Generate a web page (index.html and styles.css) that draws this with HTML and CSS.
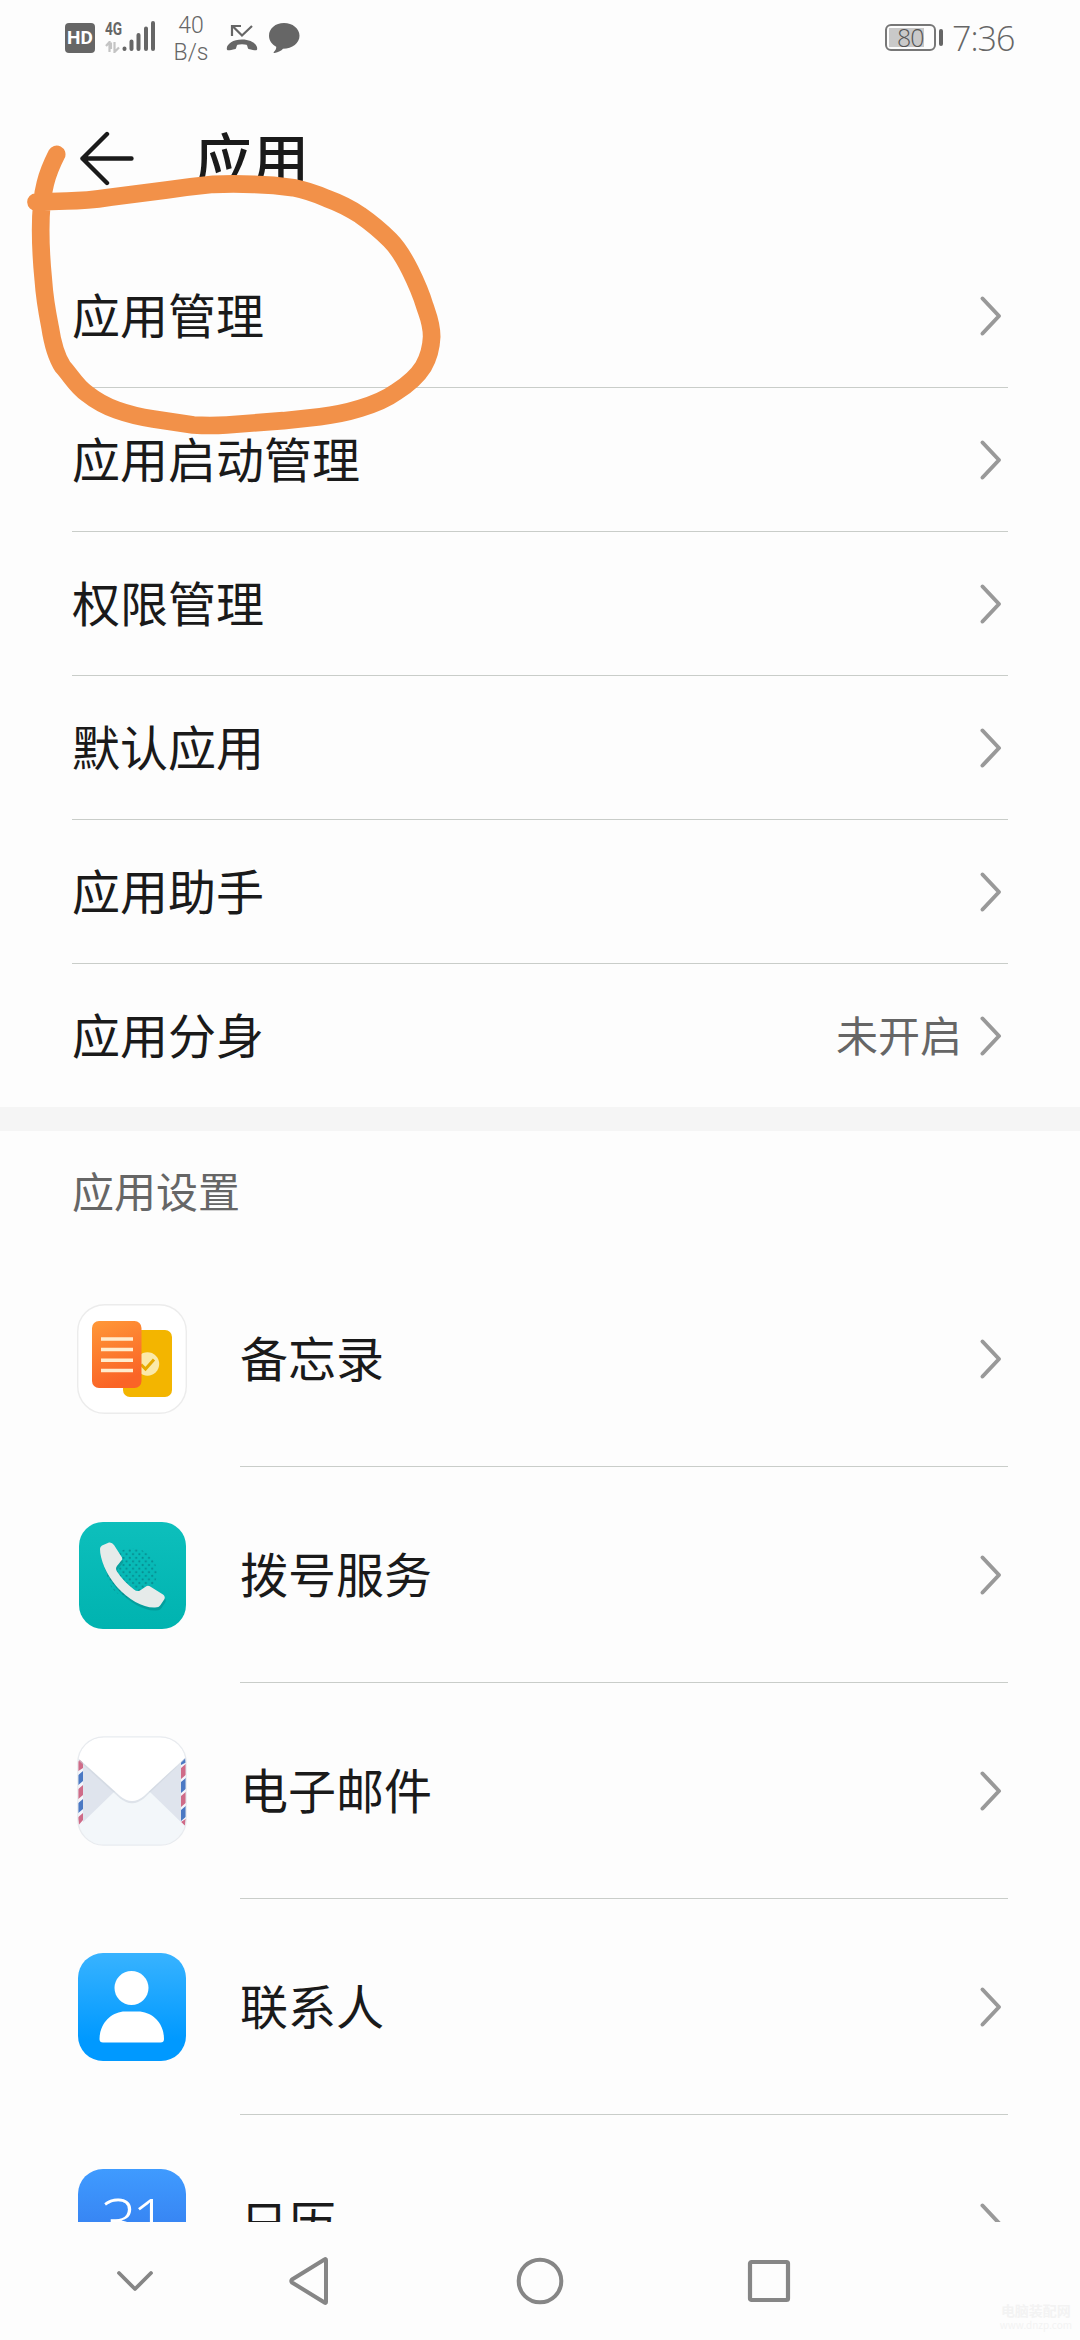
FILE: index.html
```html
<!DOCTYPE html>
<html lang="zh-CN">
<head>
<meta charset="utf-8">
<title>应用</title>
<link rel="stylesheet" href="styles.css">
</head>
<body>
<svg class="defs" width="0" height="0">
  <symbol id="chevron" viewBox="0 0 24 42"><path d="M3.5 3.5 20 21 3.5 38.5" fill="none" stroke="#999" stroke-width="4" stroke-linecap="round" stroke-linejoin="round"/></symbol>
</svg>
<div class="screen">
  <header class="status">
    <div class="hd">HD</div>
    <div class="signal">
      <div class="net"><span class="gen">4G</span>
        <svg width="15" height="12" viewBox="0 0 15 12"><path d="M1 5 4.5 1V11M6 1.5V8M9.500 1V11L14 6.500" fill="none" stroke="#c4c4c4" stroke-width="2.200"/></svg>
      </div>
      <svg class="bars" width="34" height="32" viewBox="0 0 34 32"><g stroke="#666" stroke-width="4" stroke-linecap="round"><path d="M2.500 28.500V29M9.500 21.500V29M16.500 15V29M24 8.500V29M31 3V29"/></g></svg>
    </div>
    <div class="speed"><span>40</span><span>B/s</span></div>
    <svg class="missed" width="32" height="28" viewBox="0 0 32 28"><path d="M6 12V2H15M6.500 2 16 11.500 26 2" fill="none" stroke="#666" stroke-width="2.200"/><path d="M.8 25C.5 20 7 15.500 16 15.500S31.500 20 31.200 25C31 27 29 26.500 22.500 25 21.500 24.700 21.800 22 20.500 20.800 18 20 14 20 11.500 20.800 10.200 22 10.500 24.700 9.500 25 3 26.500 1 27 .8 25Z" fill="#666"/></svg>
    <svg class="bubble" width="32" height="32" viewBox="0 0 32 32"><path d="M16 1C7.500 1 1 6.500 1 13.700c0 4.800 3 8.800 7.200 11 .3 1.800-.7 3.500-2.400 5.300-.5.700 0 1.200.8 1 4-.9 6.700-2.200 8.400-4.300C24.500 26.700 31.500 21 31.500 13.700 31.500 6.500 24.500 1 16 1Z" fill="#666"/></svg>
    <div class="battery"><div class="shell"><span class="level">80</span></div><i class="tip"></i></div>
    <time class="clock">7:36</time>
  </header>

  <div class="titlebar">
    <svg width="56" height="56" viewBox="0 0 56 56"><path d="M29 3 4.500 27.500 29 52M4.500 27.500H53.500" fill="none" stroke="#1a1a1a" stroke-width="4.400" stroke-linecap="round" stroke-linejoin="round"/></svg>
    <h1>应用</h1>
  </div>

  <main>
    <ul class="menu">
      <li><span>应用管理</span><svg class="chev"><use href="#chevron"/></svg></li>
      <li><span>应用启动管理</span><svg class="chev"><use href="#chevron"/></svg></li>
      <li><span>权限管理</span><svg class="chev"><use href="#chevron"/></svg></li>
      <li><span>默认应用</span><svg class="chev"><use href="#chevron"/></svg></li>
      <li><span>应用助手</span><svg class="chev"><use href="#chevron"/></svg></li>
      <li><span>应用分身</span><em>未开启</em><svg class="chev"><use href="#chevron"/></svg></li>
    </ul>
    <div class="band"></div>
    <h2>应用设置</h2>
    <ul class="apps">
      <li>
        <svg class="icon" viewBox="0 0 110 110">
          <defs><linearGradient id="memo" x2="0.300" y2="1"><stop stop-color="#ff9838"/><stop offset="1" stop-color="#fa6426"/></linearGradient></defs>
          <rect x=".7" y=".7" width="108.600" height="108.600" rx="27" fill="#fff" stroke="#ececec" stroke-width="1.400"/>
          <rect x="46" y="26" width="49" height="67" rx="7" fill="#f3b500"/>
          <circle cx="70.500" cy="60" r="11.700" fill="#fbe9a9"/>
          <path d="M64 60.500 68.500 65 77 55.500" fill="none" stroke="#e6a900" stroke-width="3"/>
          <rect x="15" y="17" width="49.500" height="67" rx="7" fill="url(#memo)"/>
          <path d="M24 35H56M24 45.500H56M24 56.200H56M24 66.500H56" stroke="#ffeccd" stroke-width="3.400"/>
        </svg>
        <div class="line"><span>备忘录</span><svg class="chev"><use href="#chevron"/></svg></div>
      </li>
      <li>
        <svg class="icon" viewBox="0 0 110 110">
          <defs>
            <linearGradient id="dial" x2="0" y2="1"><stop stop-color="#0dbfbc"/><stop offset="1" stop-color="#00b3b0"/></linearGradient>
            <pattern id="dots" width="6.400" height="7.200" patternUnits="userSpaceOnUse"><circle cx="1.600" cy="1.800" r="1.100" fill="#078f92"/><circle cx="4.800" cy="5.400" r="1.100" fill="#078f92"/></pattern>
          </defs>
          <rect x="2" y="2" width="107" height="107" rx="24" fill="url(#dial)"/>
          <circle cx="55" cy="53" r="25" fill="url(#dots)"/>
          <path transform="translate(1 3)" opacity=".25" fill="#045a5c" d="M25 25.500 32 22.500Q35 22 37 25L45 37.500Q46 39.500 44 41L40 46Q38 48.500 40 51.500 46 61 57 69.500 60 72 63 70.500L69 66.500Q71 65 74 67L86 74.500Q88.500 76.500 87.500 79L83.500 85Q82 87.500 78 87.500C66 88 52 80 40 67 29 54 23 39 23 29Q23 26.500 25 25.500Z"/>
          <path fill="#e6ebea" d="M25 25.500 32 22.500Q35 22 37 25L45 37.500Q46 39.500 44 41L40 46Q38 48.500 40 51.500 46 61 57 69.500 60 72 63 70.500L69 66.500Q71 65 74 67L86 74.500Q88.500 76.500 87.500 79L83.500 85Q82 87.500 78 87.500C66 88 52 80 40 67 29 54 23 39 23 29Q23 26.500 25 25.500Z"/>
        </svg>
        <div class="line"><span>拨号服务</span><svg class="chev"><use href="#chevron"/></svg></div>
      </li>
      <li>
        <svg class="icon" viewBox="0 0 110 110">
          <defs><clipPath id="mailclip"><rect x="1" y="1" width="108" height="108" rx="26"/></clipPath></defs>
          <g clip-path="url(#mailclip)">
            <rect width="110" height="110" fill="#fff"/>
            <path d="M0 22 42 56 0 95ZM110 22 68 56 110 95Z" fill="#dfe4ed"/>
            <path d="M0 22H6V90H0ZM104 22H110V90H104Z" fill="#f4f5fb"/>
            <path d="M0 26 4 23 6 27V32L0 36ZM0 54 6 49V59L0 64ZM0 82 6 77V84L0 91ZM104 32 110 27V38L104 43ZM104 60 110 55V66L104 71ZM104 86 108 90H110V82Z" fill="#cf6b88"/>
            <path d="M0 40 6 35V45L0 50ZM0 68 6 63V73L0 78ZM104 26 110 20V26L104 29ZM104 46 110 41V52L104 57ZM104 74 110 69V80L104 85Z" fill="#4b79c4"/>
            <path d="M0 92 37 56H73L110 92V110H0Z" fill="#f3f7fa"/>
            <path d="M0 22 43 61Q55 71 67 61L110 20V0H0Z" fill="#ccd3dc" opacity=".55" transform="translate(0 1.200)"/>
            <path d="M0 21 43 60Q55 70 67 60L110 20V0H0Z" fill="#fff"/>
          </g>
          <rect x=".8" y=".8" width="108.400" height="108.400" rx="26" fill="none" stroke="#e8ebef" stroke-width="1.300"/>
        </svg>
        <div class="line"><span>电子邮件</span><svg class="chev"><use href="#chevron"/></svg></div>
      </li>
      <li>
        <svg class="icon" viewBox="0 0 110 110">
          <defs><linearGradient id="people" x2="0" y2="1"><stop stop-color="#38b3ff"/><stop offset=".8" stop-color="#0099ff"/></linearGradient></defs>
          <rect x="1" y="1" width="108" height="108" rx="25" fill="url(#people)"/>
          <circle cx="54.500" cy="36" r="17" fill="#fff"/>
          <path d="M22.500 87C22.500 71 35 59.500 48 59.500H61C75 59.500 87 71 87 87Q87 90.500 83.500 90.500H26Q22.500 90.500 22.500 87Z" fill="#fff"/>
        </svg>
        <div class="line"><span>联系人</span><svg class="chev"><use href="#chevron"/></svg></div>
      </li>
      <li>
        <svg class="icon" viewBox="0 0 110 110">
          <defs><linearGradient id="cal" x2="0" y2="1"><stop stop-color="#3f9bff"/><stop offset="1" stop-color="#3070e8"/></linearGradient></defs>
          <rect x="1" y="1" width="108" height="108" rx="25" fill="url(#cal)"/>
          <text class="date" x="24" y="76">31</text>
        </svg>
        <div class="line"><span>日历</span><svg class="chev"><use href="#chevron"/></svg></div>
      </li>
    </ul>
  </main>

  <nav>
    <svg width="40" height="24" viewBox="0 0 40 24"><path d="M4 4 20 20 36 4" fill="none" stroke="#868686" stroke-width="3.800" stroke-linecap="round" stroke-linejoin="round"/></svg>
    <svg width="42" height="50" viewBox="0 0 42 50"><path d="M38 4V46Q38 47.500 36.500 46.500L4 26.500Q2.500 25 4 23.500L36.500 3.500Q38 2.500 38 4Z" fill="none" stroke="#868686" stroke-width="4" stroke-linejoin="round"/></svg>
    <svg width="50" height="50" viewBox="0 0 50 50"><circle cx="25" cy="25" r="21.300" fill="none" stroke="#868686" stroke-width="4"/></svg>
    <svg width="46" height="46" viewBox="0 0 46 46"><rect x="4" y="4" width="38" height="38" rx="1.500" fill="none" stroke="#868686" stroke-width="4.200"/></svg>
  </nav>

  <svg class="marker" width="480" height="460" viewBox="0 0 1440 1380">
    <path transform="translate(0 360)" d="M170 103Q146 150 136 190C124 235 122 280 122 330Q122 400 130 480C134 540 142 580 150 620Q162 700 188 740C215 770 230 800 260 820Q300 852 350 870 400 888 460 897L580 915Q630 918 680 915L850 902 960 890Q1025 882 1080 865C1125 852 1155 840 1190 815Q1245 780 1270 740 1293 700 1295 650C1295 610 1285 590 1275 560Q1260 510 1230 450C1210 410 1195 385 1170 360Q1130 320 1080 285 1035 255 980 235C940 218 915 210 880 203Q820 194 760 193 700 190 640 193 570 200 500 210L330 232Q260 243 200 243L108 246"/>
  </svg>
  <div class="watermark"><b>电脑装配网</b><span>www.dnzp.com</span></div>
</div>
</body>
</html>
```
FILE: styles.css
```css
* { box-sizing: border-box; }
body {
  margin: 0;
  background: #fdfdfd;
  color: #1a1a1a;
  font-family: "Noto Sans CJK SC", sans-serif;
}
svg { display: block; flex: none; }
.defs { position: absolute; }
ul { margin: 0; padding: 0; list-style: none; }
.screen {
  position: relative;
  width: 1080px;
  height: 2340px;
  overflow: hidden;
  display: flex;
  flex-direction: column;
}

.status {
  height: 80px;
  padding: 0 62px 0 65px;
  display: flex;
  align-items: flex-start;
  color: #666;
}
.hd {
  width: 30px;
  height: 30px;
  margin-top: 23px;
  border-radius: 4px;
  background: #666;
  color: #fff;
  font: 700 19px/30px Roboto, sans-serif;
  text-align: center;
}
.signal { display: flex; margin: 20px 0 0 10px; }
.net { width: 18px; display: flex; flex-direction: column; gap: 4px; }
.gen { font: 700 19px/17px Roboto, sans-serif; transform: scaleX(.72); transform-origin: left; white-space: nowrap; }
.bars { margin-left: -1px; }
.speed {
  width: 60px;
  margin: 12px 0 0 5px;
  display: flex;
  flex-direction: column;
  align-items: center;
  font: 300 23px/27px Roboto, sans-serif;
}
.missed { margin: 24px 0 0 5px; }
.bubble { margin: 22px 0 0 10px; }
.battery { display: flex; align-items: center; gap: 3px; margin: 24px 0 0 auto; }
.shell { width: 51px; height: 27px; border: 2px solid #777; border-radius: 6px; padding: 2px; }
.level {
  display: block;
  width: 35px;
  height: 19px;
  background: #c9c9c9;
  color: #555;
  font: 300 25px/19px "Open Sans", sans-serif;
  letter-spacing: -1px;
  text-indent: 8px;
}
.tip { width: 4px; height: 17px; border-radius: 2px; background: #666; }
.clock {
  width: 66px;
  margin: 18px 0 0 9px;
  font: 300 34px/40px "Open Sans", sans-serif;
  letter-spacing: -1px;
  white-space: nowrap;
}

.titlebar { height: 164px; padding: 51px 0 0 78px; display: flex; }
h1 { margin: -15px 0 0 61px; font-size: 57px; line-height: 80px; font-weight: 500; }

main { height: 1978px; overflow: hidden; }
.menu { padding: 0 72px; }
.menu li { height: 144px; display: flex; align-items: center; border-bottom: 1px solid #c9cdc9; }
.menu li:last-child { height: 143px; border: 0; }
.menu span, .line span { flex: 1; padding-bottom: 5px; font-size: 48px; line-height: 72px; }
em { margin-right: 17px; padding-bottom: 3px; color: #666; font-size: 42px; line-height: 64px; font-style: normal; }
.chev { width: 24px; height: 42px; margin-right: 5px; }
.band { height: 24px; background: #f5f5f5; }
h2 { height: 120px; margin: 0; padding: 27px 72px; color: #666; font-size: 42px; line-height: 64px; font-weight: 400; }
.apps li { height: 216px; padding: 0 72px 0 77px; display: flex; align-items: center; gap: 53px; }
.icon { width: 110px; height: 110px; }
.line { flex: 1; height: 216px; display: flex; align-items: center; border-bottom: 1px solid #c9cdc9; }
.date { fill: #fff; font: 300 63px "Open Sans", sans-serif; letter-spacing: -5px; }

nav {
  height: 118px;
  padding-left: 48px;
  display: grid;
  grid-template-columns: 174px 174px 288px 170px;
  place-items: center;
}

.marker { position: absolute; left: 0; top: 0; }
.marker path { fill: none; stroke: #f29149; stroke-width: 53; stroke-linecap: round; stroke-linejoin: round; }
.watermark {
  position: absolute;
  right: 8px;
  bottom: 9px;
  display: flex;
  flex-direction: column;
  align-items: center;
  color: #f3f3f3;
  font-size: 10px;
  line-height: 12px;
}
.watermark b { font-size: 14px; line-height: 18px; }
```
